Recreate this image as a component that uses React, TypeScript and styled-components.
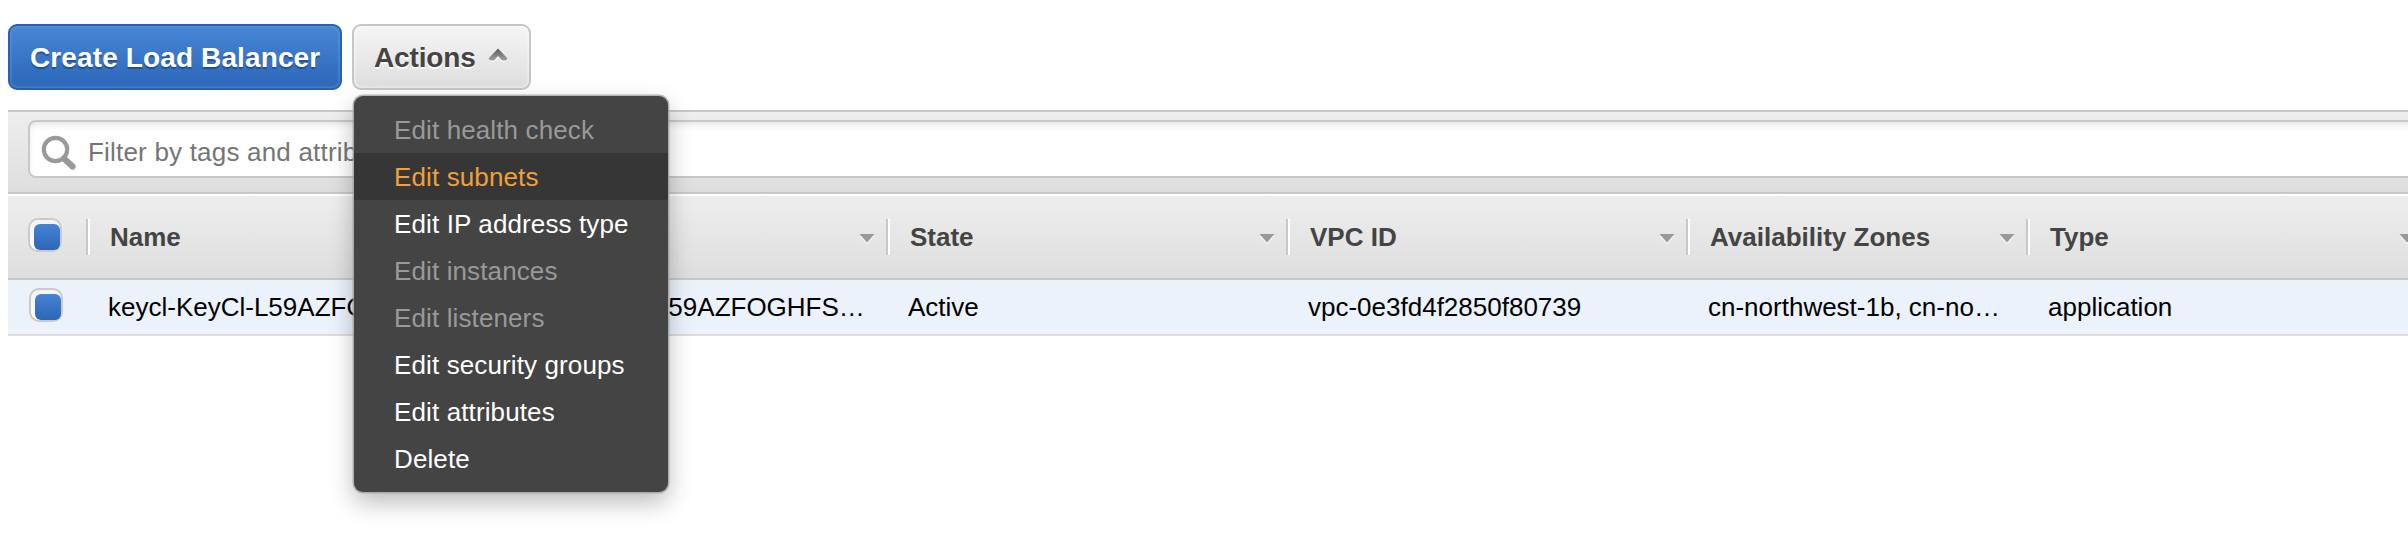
import React from "react";
import styled, { createGlobalStyle } from "styled-components";

const GlobalStyle = createGlobalStyle`
  *, *::before, *::after { box-sizing: border-box; }
  body {
    margin: 0;
    background: #fff;
    font-family: "Liberation Sans", Arial, sans-serif;
    font-size: 26px;
    color: #000;
    overflow: hidden;
  }
`;

const Page = styled.div`
  width: 2408px;
  height: 538px;
  padding: 24px 0 0 8px;
  overflow: hidden;
`;

const Toolbar = styled.div`
  display: flex;
  gap: 10px;
  height: 86px;
`;

const Button = styled.button<{ $primary?: boolean }>`
  display: flex;
  align-items: center;
  width: ${(p) => (p.$primary ? 334 : 179)}px;
  height: 66px;
  padding: 1px 0 0 20px;
  border: 2px solid ${(p) => (p.$primary ? "#2b60ad" : "#c6c6c6")};
  border-radius: 9px;
  background: ${(p) =>
    p.$primary
      ? "linear-gradient(#4786d6, #2c67b8)"
      : "linear-gradient(#f5f5f5, #dedede)"};
  box-shadow: inset 0 0 3px 1px
    ${(p) => (p.$primary ? "rgba(120,170,235,.45)" : "rgba(255,255,255,.6)")};
  color: ${(p) => (p.$primary ? "#fff" : "#444")};
  text-shadow: 0 2px 1px
    ${(p) => (p.$primary ? "rgba(0,0,0,.3)" : "rgba(255,255,255,.9)")};
  font: bold 28px "Liberation Sans", Arial, sans-serif;
  letter-spacing: ${(p) => (p.$primary ? 0.12 : -0.15)}px;
  white-space: nowrap;
`;

const Caret = styled.svg`
  width: 20px;
  height: 16px;
  margin: -5px 0 0 12px;
`;

const MenuAnchor = styled.div`
  position: relative;
`;

const Menu = styled.ul`
  position: absolute;
  z-index: 2;
  top: 72px;
  left: 2px;
  width: 314px;
  margin: 0;
  padding: 10px 0;
  list-style: none;
  border-radius: 9px;
  background: #444;
  box-shadow: 0 0 0 1.5px rgba(160, 160, 160, 0.75),
    0 10px 24px rgba(0, 0, 0, 0.28);
`;

const tones = { normal: "#fff", disabled: "#999", active: "#f0a03c" };

const MenuItem = styled.li<{ $tone: keyof typeof tones }>`
  height: 47px;
  padding-left: 40px;
  line-height: 48px;
  letter-spacing: 0.12px;
  white-space: nowrap;
  color: ${(p) => tones[p.$tone]};
  background: ${(p) => (p.$tone === "active" ? "#363636" : "transparent")};
`;

const FilterBar = styled.div`
  height: 84px;
  padding: 8px 0 0 20px;
  border-top: 2px solid #c8c8c8;
  border-bottom: 2px solid #c8c8c8;
  background: linear-gradient(#eee, #dedede);
`;

const FilterField = styled.div`
  display: flex;
  align-items: center;
  height: 58px;
  margin-right: -20px;
  padding: 7px 0 0 11px;
  border: 2px solid #c8c8c8;
  border-radius: 8px;
  background: #fff;
  box-shadow: inset 0 4px 7px -2px rgba(0, 0, 0, 0.12);
  color: #757575;
  letter-spacing: 0.2px;
  white-space: nowrap;
`;

const SearchIcon = styled.svg`
  width: 38px;
  height: 38px;
  margin-right: 9px;
`;

const Table = styled.div`
  border-top: 2px solid #fff;
`;

const columns = "78px 400px 400px 400px 400px 340px 382px";

const HeaderRow = styled.div`
  display: grid;
  grid-template-columns: ${columns};
  height: 84px;
  padding-top: 22px;
  border-bottom: 2px solid #c8c8c8;
  background: linear-gradient(#eee, #dedede);
`;

const HeaderCell = styled.div`
  display: flex;
  align-items: center;
  justify-content: space-between;
  height: 36px;
  margin-top: 1px;
  padding: 0 0 0 22px;
  border-left: 2px solid #c8c8c8;
  box-shadow: inset 2px 0 #fff;
  font-weight: bold;
  color: #444;
  white-space: nowrap;
`;

const SortArrow = styled.svg<{ $clipped?: boolean }>`
  flex: none;
  width: 16px;
  height: 12px;
  margin: 3px ${(p) => (p.$clipped ? -7 : 11)}px 0 0;
`;

const BodyRow = styled.div`
  display: grid;
  grid-template-columns: ${columns};
  height: 56px;
  border-bottom: 2px solid #dcdcdc;
  background: #ebf2fc;
`;

const BodyCell = styled.div`
  padding-left: 22px;
  line-height: 54px;
  white-space: nowrap;
  overflow: hidden;
`;

const CheckCell = styled.div<{ $body?: boolean }>`
  padding: ${(p) => (p.$body ? "8px 0 0 21px" : "0 0 0 20px")};
`;

const Checkbox = styled.div`
  width: 34px;
  height: 34px;
  padding: 4px 0 0 4px;
  border: 2px solid #cacaca;
  border-radius: 10px;
  background: linear-gradient(#f3f3f3, #fff);
  &::before {
    content: "";
    display: block;
    width: 26px;
    height: 26px;
    border-radius: 6px;
    background: linear-gradient(#4583d3, #2c66b7);
  }
`;

const actions: { label: string; tone: keyof typeof tones }[] = [
  { label: "Edit health check", tone: "disabled" },
  { label: "Edit subnets", tone: "active" },
  { label: "Edit IP address type", tone: "normal" },
  { label: "Edit instances", tone: "disabled" },
  { label: "Edit listeners", tone: "disabled" },
  { label: "Edit security groups", tone: "normal" },
  { label: "Edit attributes", tone: "normal" },
  { label: "Delete", tone: "normal" },
];

const headers = ["Name", "DNS name", "State", "VPC ID", "Availability Zones", "Type"];

const balancer = [
  "keycl-KeyCl-L59AZFOGHFS…",
  "keycl-KeyCl-L59AZFOGHFS…",
  "Active",
  "vpc-0e3fd4f2850f80739",
  "cn-northwest-1b, cn-no…",
  "application",
];

export default function App() {
  return (
    <Page>
      <GlobalStyle />
      <Toolbar>
        <Button $primary>Create Load Balancer</Button>
        <MenuAnchor>
          <Button>
            Actions
            <Caret viewBox="0 0 20 16">
              <defs>
                <linearGradient id="caret" x1="0" y1="0" x2="0" y2="1">
                  <stop offset="0" stopColor="#5c5c5c" />
                  <stop offset="1" stopColor="#a0a0a0" />
                </linearGradient>
              </defs>
              <path d="M10 3 19.500 13 17 15H14L10 10.500 6 15H3L0.500 13Z" fill="#fafafa" />
              <path d="M10 1.500 19.500 11.500 18 13.500H14L10 9 6 13.500H2L0.500 11.500Z" fill="url(#caret)" />
            </Caret>
          </Button>
          <Menu>
            {actions.map((a) => (
              <MenuItem key={a.label} $tone={a.tone}>
                {a.label}
              </MenuItem>
            ))}
          </Menu>
        </MenuAnchor>
      </Toolbar>
      <FilterBar>
        <FilterField>
          <SearchIcon viewBox="0 0 38 38" fill="none" stroke="#999">
            <circle cx="14.500" cy="15.500" r="11.700" strokeWidth="4.200" />
            <path d="M23 24.500 31.500 32.500" strokeWidth="6.300" strokeLinecap="round" />
          </SearchIcon>
          Filter by tags and attributes
        </FilterField>
      </FilterBar>
      <Table>
        <HeaderRow>
          <CheckCell>
            <Checkbox />
          </CheckCell>
          {headers.map((h, i) => (
            <HeaderCell key={h}>
              {h}
              <SortArrow $clipped={i === headers.length - 1} viewBox="0 0 16 12">
                <path d="M0.500 3H15.500L8 11.500Z" fill="#f6f6f6" />
                <path d="M0.500 1H15.500L8 9.500Z" fill="#999" />
              </SortArrow>
            </HeaderCell>
          ))}
        </HeaderRow>
        <BodyRow>
          <CheckCell $body>
            <Checkbox />
          </CheckCell>
          {balancer.map((v, i) => (
            <BodyCell key={i}>{v}</BodyCell>
          ))}
        </BodyRow>
      </Table>
    </Page>
  );
}
